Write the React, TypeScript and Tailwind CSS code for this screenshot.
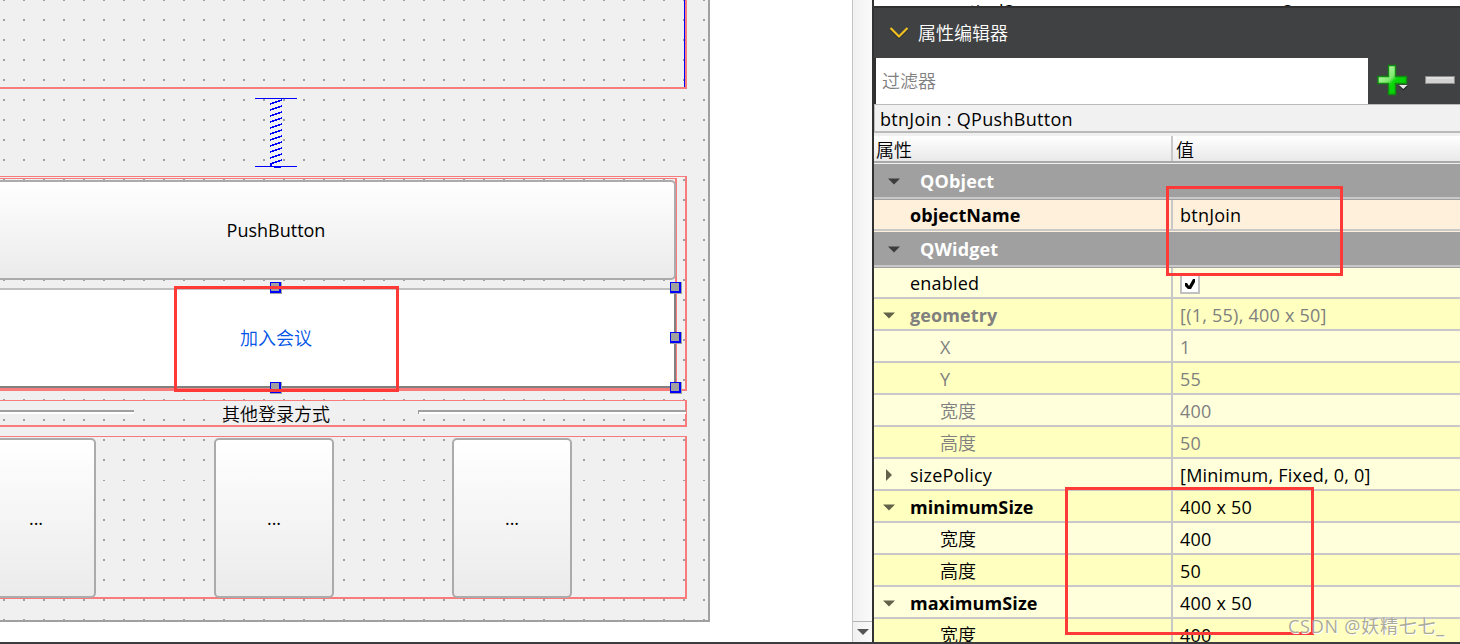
import React from 'react';

type Row = {
  name: string;
  value?: string;
  kind?: 'category' | 'peach' | 'first';
  arrow?: 'down' | 'right';
  bold?: boolean;
  muted?: boolean;
  child?: boolean;
  checkbox?: boolean;
};

const rows: Row[] = [
  { name: 'QObject', kind: 'category' },
  { name: 'objectName', value: 'btnJoin', kind: 'peach', bold: true },
  { name: 'QWidget', kind: 'category' },
  { name: 'enabled', kind: 'first', checkbox: true },
  { name: 'geometry', value: '[(1, 55), 400 x 50]', arrow: 'down', bold: true, muted: true },
  { name: 'X', value: '1', child: true, muted: true },
  { name: 'Y', value: '55', child: true, muted: true },
  { name: '宽度', value: '400', child: true, muted: true },
  { name: '高度', value: '50', child: true, muted: true },
  { name: 'sizePolicy', value: '[Minimum, Fixed, 0, 0]', arrow: 'right' },
  { name: 'minimumSize', value: '400 x 50', arrow: 'down', bold: true },
  { name: '宽度', value: '400', child: true },
  { name: '高度', value: '50', child: true },
  { name: 'maximumSize', value: '400 x 50', arrow: 'down', bold: true },
  { name: '宽度', value: '400', child: true },
];

const coils = [100, 106, 112, 118, 124, 130, 136, 142, 148, 154, 160];

function Handle({ className }: { className: string }) {
  return (
    <div className={`absolute w-[12px] h-[12px] bg-[#a0a0a0] ${className}`}>
      <div className="w-[11px] h-[11px] bg-[#a0a0a0] border-[#0000ff] border-t border-l border-r-2 border-b-2"></div>
    </div>
  );
}

function Arrow({ dir, color }: { dir: 'down' | 'right'; color: string }) {
  return (
    <svg className="w-3 h-3 shrink-0" viewBox="0 0 12 12" fill={color}>
      {dir === 'down' ? <path d="M0 3.5h12L6 9.5z" /> : <path d="M3 0v12L9 6z" />}
    </svg>
  );
}

function ToolButton() {
  return (
    <button className="w-[120px] h-[160px] shrink-0 rounded-[5px] border-2 border-[#ababab] bg-linear-to-b from-white to-[#ebebeb] text-black">...</button>
  );
}

function FormCanvas() {
  return (
    <div className="relative isolate w-[834px] h-[622px] -ml-[124px] shrink-0 flex flex-col border-r-2 border-b-2 border-[#a0a0a0] bg-[#f0f0f0] bg-[conic-gradient(from_270deg_at_2px_2px,#a0a0a0_90deg,transparent_0)] bg-size-[20px_20px] bg-position-[7px_19px]">
      <div className="absolute -z-10 left-0 top-[479px] w-[832px] h-px bg-[#f0f0f0]"></div>

      <div className="w-[811px] h-[89px] shrink-0 border-r-2 border-b-2 border-[#f87c7c]">
        <div className="h-full border-r border-[#0000ff]"></div>
      </div>

      {/* Vertical spacer */}
      <div className="w-[800px] h-[87px] shrink-0 flex justify-center">
        <svg className="w-[42px] h-[87px]" viewBox="255 89 42 87" shapeRendering="crispEdges">
          <path d="M255 98.5h42M255 166.5h42" stroke="#0000ff" />
          {coils.map(y => (
            <path key={y} d={`M270 ${y + 4}L282 ${y}`} stroke="#0000ff" strokeWidth="1.7" />
          ))}
          <path d="M271 164v2M274 167h7" stroke="#0000ff" strokeWidth="2" />
        </svg>
      </div>

      {/* Push buttons */}
      <div className="w-[811px] h-[215px] shrink-0 pt-px border-t border-r-2 border-b-2 border-[#f87c7c]">
        <div className="relative w-[801px] h-[211px] pt-px flex flex-col gap-2 border-t border-r-2 border-b border-[#f87c7c]">
          <button className="w-[800px] h-[100px] shrink-0 rounded-[5px] border-2 border-[#ababab] bg-linear-to-b from-white to-[#ebebeb] text-black">PushButton</button>
          <button className="w-[800px] h-[100px] shrink-0 border-2 border-t-[#c0c0c0] border-r-[#808080] border-b-[#808080] bg-white font-[350] text-[#0055e6]">加入会议</button>
          <Handle className="left-[394px] top-[103px]" />
          <Handle className="left-[794px] top-[103px]" />
          <Handle className="left-[794px] top-[153px]" />
          <Handle className="left-[394px] top-[203px]" />
          <Handle className="left-[794px] top-[203px]" />
        </div>
      </div>

      {/* Separator with label */}
      <div className="w-[811px] h-[27px] shrink-0 mt-[9px] flex border-t border-r-2 border-b-2 border-[#f87c7c]">
        <div className="w-[258px] h-1 mt-[9px] bg-white border-t-2 border-[#a0a0a0]"></div>
        <div className="w-[284px] h-[24px] flex items-center justify-center text-black font-[350] pt-[1px]">其他登录方式</div>
        <div className="flex-1 -mr-px h-1 mt-[9px] shrink-0 bg-white border-t-2 border-l border-[#a0a0a0]"></div>
      </div>

      {/* Tool buttons */}
      <div className="w-[811px] h-[163px] shrink-0 mt-[9px] pt-px pl-[100px] flex gap-[118px] border-t border-r-2 border-b-2 border-[#f87c7c]">
        <ToolButton />
        <ToolButton />
        <ToolButton />
      </div>
    </div>
  );
}

function PropertyRow({ row, odd }: { row: Row; odd: boolean }) {
  if (row.kind === 'category') {
    return (
      <div className="h-[36px] shrink-0 bg-[#a0a0a0]">
        <div className="h-[35px] pl-[14px] flex items-center border-b-2 border-[#c8c8c8]">
          <Arrow dir="down" color="#3c3c3c" />
          <span className="ml-5 font-bold text-white tracking-[0.15px]">{row.name}</span>
        </div>
      </div>
    );
  }
  const height = row.kind === 'peach' ? 'h-[31px] mb-px' : row.kind === 'first' ? 'h-[31px]' : 'h-[32px] *:pt-[2px]';
  const bg = row.kind === 'peach' ? 'bg-[#fff0dc]' : odd ? 'bg-[#ffffbf]' : 'bg-[#ffffdc]';
  const cjk = /[\u4e00-\u9fff]/.test(row.name);
  return (
    <div className={`${height} ${bg} shrink-0 flex border-b-2 border-[#c8c8c8] ${row.muted ? 'text-[#808080]' : 'text-black'}`}>
      <div className="w-[299px] shrink-0 flex items-center border-r-2 border-[#c8c8c8]">
        <div className="w-[36px] pl-[9px] shrink-0">
          {row.arrow && <Arrow dir={row.arrow} color="#62624a" />}
        </div>
        <span className={`${row.child ? 'ml-[30px]' : ''} ${row.bold ? 'font-bold tracking-[0.1px]' : cjk ? 'font-[350]' : 'tracking-[0.2px]'}`}>{row.name}</span>
      </div>
      <div className="flex-1 pl-[7px] flex items-center tracking-[0.24px]">
        {row.checkbox ? (
          <span className="w-[20px] h-[20px] mt-[3px] bg-white border-2 border-[#c0c0c0]">
            <svg className="w-4 h-4" viewBox="0 0 16 16" fill="#000">
              <path d="M3 7h2l2 3 4-7h2v3l-4 7H6L3 10z" />
            </svg>
          </span>
        ) : row.value}
      </div>
    </div>
  );
}

function PropertyEditor() {
  return (
    <div className="flex-1 h-[642px] flex flex-col overflow-hidden bg-[#f0f0f0]">
      {/* Cut-off row of the object tree */}
      <div className="h-[6px] shrink-0 flex overflow-hidden bg-white leading-[24px] text-black">
        <span className="w-[339px] pl-[69px] -mt-px">verticalSpacer</span>
        <span className="pl-[69px] -mt-px">Spacer</span>
      </div>
      <div className="h-[52px] shrink-0 pl-[15px] flex items-center bg-[#404142] border-t-2 border-[#303030] text-white">
        <svg className="w-5 h-3.5" viewBox="0 0 20 14" fill="none">
          <path d="M1.5 3L10 11.5L18.5 3" stroke="#2a2a2a" strokeWidth="2.4" />
          <path d="M1.5 2L10 10.5L18.5 2" stroke="#f0c020" strokeWidth="2.2" />
        </svg>
        <span className="ml-[9px] font-[350]">属性编辑器</span>
      </div>
      <div className="h-[46px] shrink-0 flex bg-[#404142] border-l-2 border-[#303030]">
        <div className="w-[492px] pl-[6px] flex items-center bg-white font-[350] text-[#808080]">过滤器</div>
        <svg className="w-[92px] h-[46px]" viewBox="1368 58 92 46">
          <defs>
            <linearGradient id="plus" x1="0" y1="0" x2="1" y2="1">
              <stop offset="0" stopColor="#d8ffc8" />
              <stop offset="0.45" stopColor="#7be86a" />
              <stop offset="0.55" stopColor="#0bd80b" />
              <stop offset="1" stopColor="#00c800" />
            </linearGradient>
          </defs>
          <path d="M1388.500 65.500h7v11h11v7h-11v11h-7v-11h-10.500v-7h10.500z" fill="url(#plus)" stroke="#108a10" strokeWidth="1.400" />
          <path d="M1399 86h9l-4.500 4.500z" fill="#222" />
          <path d="M1399 85h8.500l-4.200 4z" fill="#e6e6e6" />
          <rect x="1425.500" y="76.500" width="29" height="7" fill="#d2d2d2" stroke="#8c8c8c" />
          <path d="M1427 78h26" stroke="#ececec" />
        </svg>
      </div>
      <div className="h-[29px] shrink-0 pl-[5px] pt-px flex items-center border-t border-l border-b-2 border-[#bababa] bg-[#f1f1f1] text-black tracking-[0.3px]">btnJoin : QPushButton</div>
      <div className="h-[31px] shrink-0 pt-[3px] bg-[#f0f0f0]">
        <div className="h-[27px] flex border-b-2 border-[#a8a8a8] bg-linear-to-b from-white to-[#e9e9e9] font-[350] text-black">
          <div className="w-[299px] pl-[2px] pt-[3px] flex items-center border-r-2 border-[#c8c8c8]">属性</div>
          <div className="pl-[3px] pt-[3px] flex items-center">值</div>
        </div>
      </div>
      <div className="flex-1 min-h-0 flex flex-col overflow-hidden bg-[#fff0dc]">
        {rows.map((row, i) => (
          <PropertyRow key={i} row={row} odd={i % 2 === 0} />
        ))}
      </div>
    </div>
  );
}

export default function App() {
  return (
    <div className="relative w-[1460px] h-[644px] overflow-hidden bg-white border-b-2 border-[#3c3c3e] text-[18px] leading-[24px] whitespace-nowrap font-['Open_Sans','Noto_Sans_CJK_SC',sans-serif]">
      <div className="h-[642px] flex">
        <div className="w-[852px] shrink-0 overflow-hidden">
          <FormCanvas />
        </div>

        {/* Scroll bar */}
        <div className="w-[20px] shrink-0 flex flex-col justify-end border-l border-[#c4c4c4] bg-linear-to-r from-[#f1f1f1] to-[#fafafa]">
          <div className="h-[21px] border-t border-[#b4b4b4] flex items-center justify-center">
            <svg className="w-3 h-1.5" viewBox="0 0 12 6" fill="#555">
              <path d="M0 0h12L6 6z" />
            </svg>
          </div>
        </div>
        <div className="w-[2px] shrink-0 bg-[#323232]"></div>

        <PropertyEditor />
      </div>

      {/* Highlight boxes */}
      <div className="absolute left-[174px] top-[286px] w-[225px] h-[106px] border-3 border-[#fd3a38]"></div>
      <div className="absolute left-[1166px] top-[186px] w-[177px] h-[90px] border-3 border-[#fd3a38]"></div>
      <div className="absolute left-[1065px] top-[487px] w-[249px] h-[148px] border-3 border-[#fd3a38]"></div>

      <div className="absolute left-[1288px] top-[614px] tracking-[0.75px] text-[#a0a090]/90 [text-shadow:1px_1px_0_#ffffff]">CSDN @妖精七七_</div>
    </div>
  );
}
